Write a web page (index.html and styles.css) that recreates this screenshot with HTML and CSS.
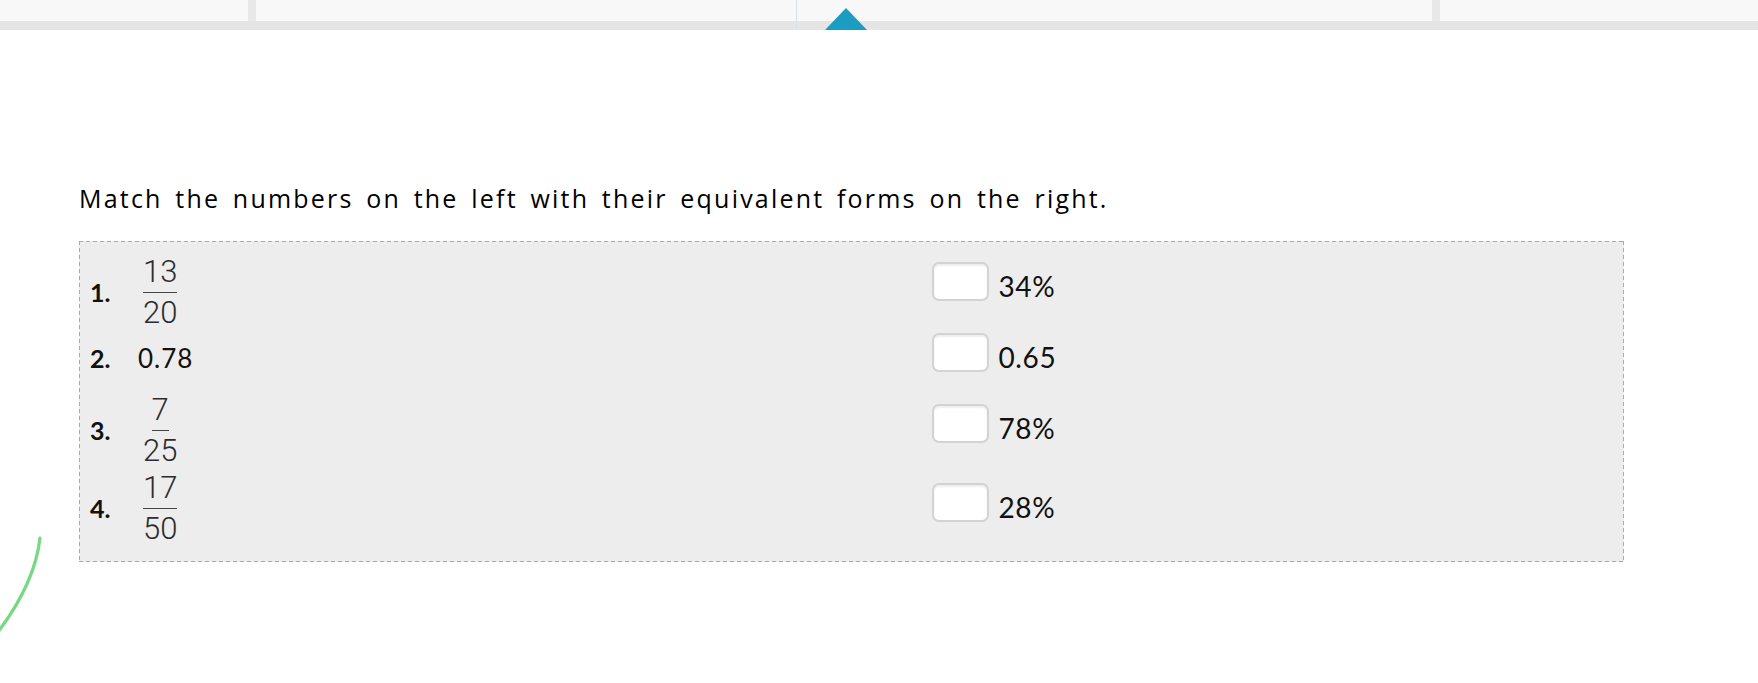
FILE: index.html
```html
<!DOCTYPE html>
<html lang="en">
<head>
<meta charset="utf-8">
<title>Matching</title>
<link rel="stylesheet" href="styles.css">
</head>
<body>
<header class="topbar">
  <div class="tabs">
    <div class="tab tab-first"></div>
    <div class="sep"></div>
    <div class="tab tab-mid"></div>
    <div class="sep"></div>
    <div class="tab tab-last"></div>
  </div>
  <div class="band"></div>
  <div class="marker-line"></div>
  <div class="marker"></div>
</header>

<main class="content">
  <p class="prompt">Match the numbers on the left with their equivalent forms on the right.</p>
  <div class="match-box">
    <ol class="left-list">
      <li class="item item-frac">
        <span class="num">1.</span>
        <span class="frac"><span class="top">13</span><span class="bot">20</span></span>
      </li>
      <li class="item item-text">
        <span class="num">2.</span>
        <span class="val">0.78</span>
      </li>
      <li class="item item-frac">
        <span class="num">3.</span>
        <span class="frac"><span class="top">7</span><span class="bot">25</span></span>
      </li>
      <li class="item item-frac">
        <span class="num">4.</span>
        <span class="frac"><span class="top">17</span><span class="bot">50</span></span>
      </li>
    </ol>
    <ul class="right-list">
      <li class="choice"><span class="chk"></span><span class="opt">34%</span></li>
      <li class="choice"><span class="chk"></span><span class="opt">0.65</span></li>
      <li class="choice"><span class="chk"></span><span class="opt">78%</span></li>
      <li class="choice"><span class="chk"></span><span class="opt">28%</span></li>
    </ul>
  </div>
</main>

<svg class="stroke" width="50" height="110" viewBox="0 530 50 110" aria-hidden="true">
  <path d="M40 538 Q35 583 -2 632" fill="none" stroke="#76d882" stroke-width="3.2" stroke-linecap="round"/>
</svg>
</body>
</html>
```

FILE: styles.css
```css
html, body {
  margin: 0;
  padding: 0;
  background: #ffffff;
}

body {
  font-family: "Lato", "Noto Sans", sans-serif;
  color: #111;
  width: 1758px;
  height: 683px;
  overflow: hidden;
  position: relative;
}

/* top bar */
.topbar {
  position: relative;
  height: 30px;
}

.tabs {
  display: flex;
  height: 21px;
}

.tab {
  background: #f8f8f8;
}

.tab-first { width: 248px; }
.tab-mid { width: 1176px; }
.tab-last { flex: 1; }

.sep {
  width: 8px;
  background: #e8e8e8;
}

.band {
  height: 9px;
  background: #e5e5e5;
}

.marker-line {
  position: absolute;
  left: 796px;
  top: 0;
  width: 1px;
  height: 30px;
  background: #d6e2ea;
}

.marker {
  position: absolute;
  left: 825px;
  top: 8px;
  width: 0;
  height: 0;
  border-left: 21px solid transparent;
  border-right: 21px solid transparent;
  border-bottom: 22px solid #1b9cc1;
}

/* content */
.content {
  padding: 0 0 0 79px;
}

.prompt {
  margin: 154px 0 0 0;
  font-family: "Open Sans", "Noto Sans", sans-serif;
  font-weight: 500;
  font-size: 25px;
  line-height: 28px;
  letter-spacing: 2.2px;
  word-spacing: 4px;
  color: #000;
}

.match-box {
  margin-top: 29px;
  width: 1545px;
  height: 321px;
  box-sizing: border-box;
  padding: 1px;
  background:
    repeating-linear-gradient(90deg, #ababab 0 4px, transparent 4px 7px) left top / 100% 1px no-repeat,
    repeating-linear-gradient(90deg, #ababab 0 4px, transparent 4px 7px) left bottom / 100% 1px no-repeat,
    repeating-linear-gradient(180deg, #ababab 0 4px, transparent 4px 7px) left top / 1px 100% no-repeat,
    repeating-linear-gradient(180deg, #ababab 0 4px, transparent 4px 7px) right top / 1px 100% no-repeat,
    #ededed;
  display: grid;
  grid-template-columns: 1fr 1fr;
}

/* left column */
.left-list {
  list-style: none;
  margin: 0;
  padding: 15px 0 0 10px;
  display: flex;
  flex-direction: column;
  gap: 8px;
}

.item {
  display: flex;
  align-items: center;
}

.item-frac {
  height: 70px;
}

.item-text {
  height: 52px;
  box-sizing: border-box;
  padding-bottom: 6px;
}

.num {
  width: 48px;
  font-weight: 700;
  font-size: 25px;
  color: #111;
}

.val {
  font-size: 26px;
  letter-spacing: 1px;
  color: #111;
}

.frac {
  margin-left: 5px;
  display: inline-flex;
  flex-direction: column;
  align-items: center;
  font-family: "Roboto", "Liberation Sans", sans-serif;
  font-weight: 300;
  font-size: 31px;
  color: #2c2c2c;
}

.frac .top {
  line-height: 30px;
  padding: 0 0 5px 0;
  border-bottom: 1.5px solid #444;
}

.frac .bot {
  line-height: 30px;
  padding: 5px 0 0 0;
}

/* right column */
.right-list {
  list-style: none;
  margin: 0;
  padding: 20px 0 0 80px;
  display: grid;
  grid-template-rows: 71px 71px 79px auto;
  line-height: 1;
  font-size: 28px;
}

.chk {
  display: inline-block;
  width: 57px;
  height: 39px;
  box-sizing: border-box;
  border: 2px solid #d3d3d3;
  border-radius: 7px;
  background: #ffffff;
  box-shadow: inset 0 2px 2px rgba(0, 0, 0, 0.07);
  vertical-align: -4px;
}

.opt {
  margin-left: 10px;
  letter-spacing: 0.6px;
  color: #111;
}

/* decorative pen stroke */
.stroke {
  position: absolute;
  left: 0;
  top: 530px;
}
```
